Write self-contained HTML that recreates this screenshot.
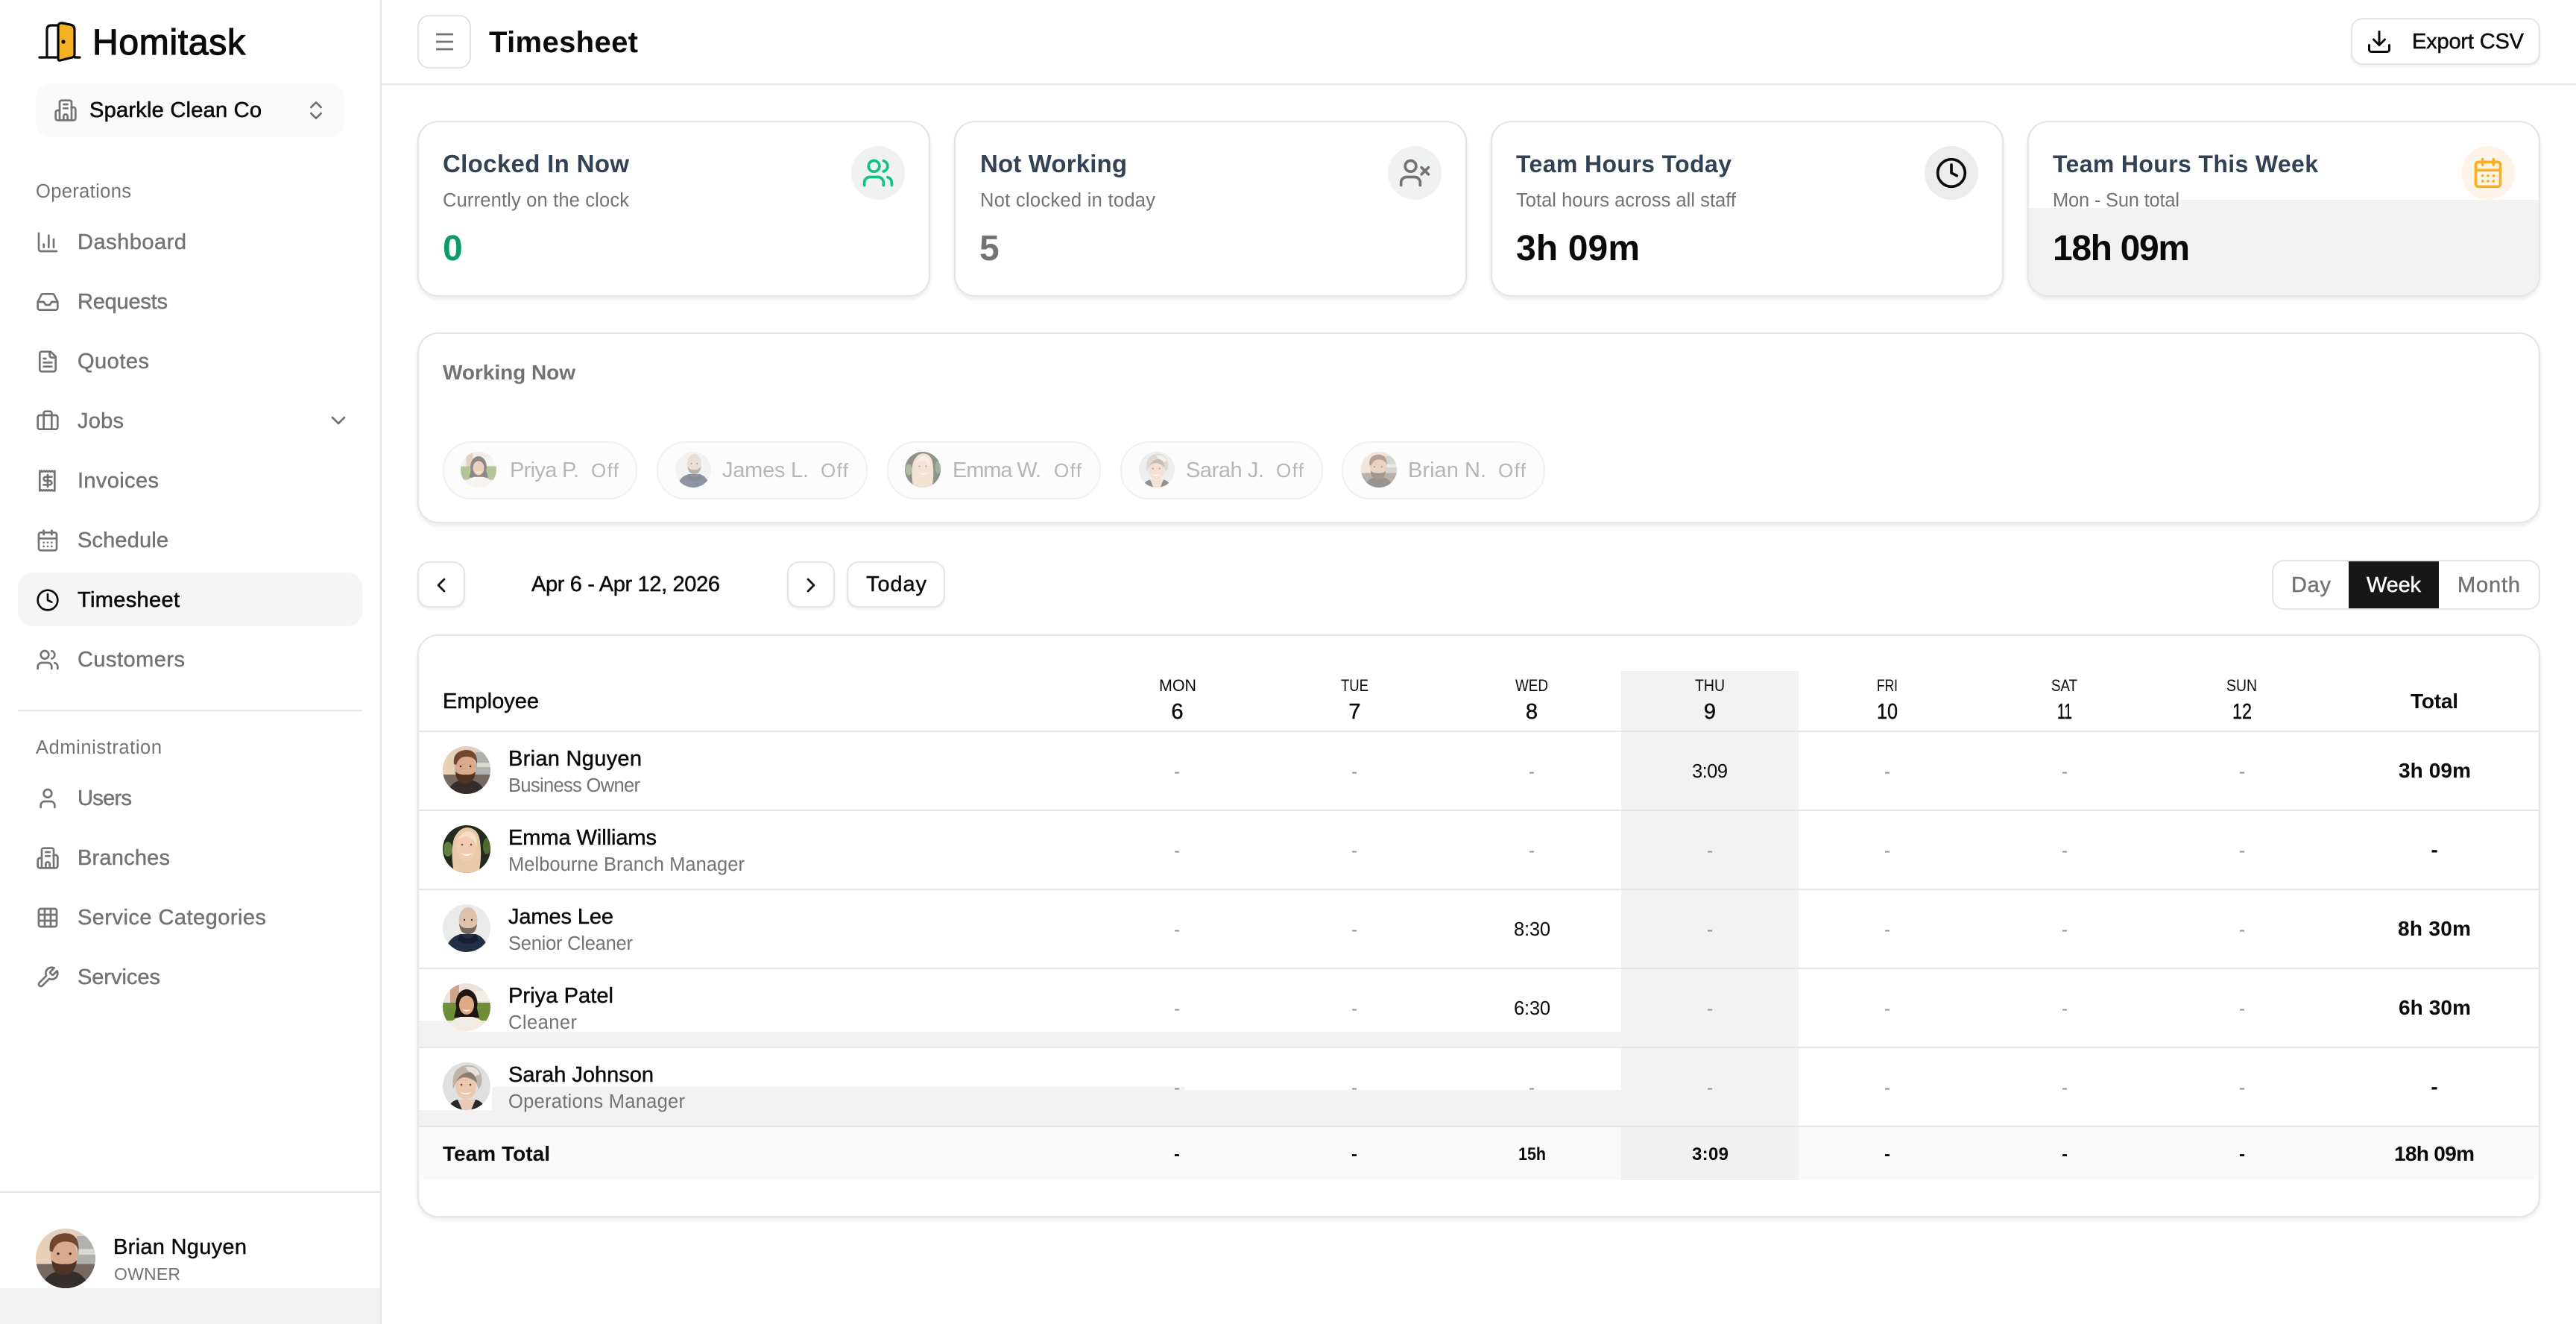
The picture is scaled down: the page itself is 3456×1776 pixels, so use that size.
<!DOCTYPE html>
<html lang="en">
<head>
<meta charset="utf-8">
<title>Timesheet - Homitask</title>
<style>
html,body{margin:0;padding:0;width:3456px;height:1776px;overflow:hidden;background:#fff;font-family:"Liberation Sans",sans-serif}
.b{position:absolute;box-sizing:border-box}
.card{background:#fff;border:2px solid #e5e5e5;border-radius:28px;box-shadow:0 3px 6px rgba(0,0,0,.09);overflow:hidden}
.btn{background:#fff;border:2px solid #e5e5e5;border-radius:16px;box-shadow:0 2px 3px rgba(0,0,0,.07)}
.chip{background:#fcfcfc;border:2px solid #f1f1f1;border-radius:38px;top:592px;height:78px}
.ln{left:562px;width:2844px;height:2px;background:#e5e5e5}
.gr{background:#f2f2f2}
svg.top{position:absolute;left:0;top:0}
text{font-family:"Liberation Sans",sans-serif;white-space:pre}
.s22{font-size:22px}.s24{font-size:25.5px}.s28{font-size:29px}.s32{font-size:32px}.s40{font-size:40px}.s48{font-size:48px}
.g{fill:#737373}.k{fill:#0a0a0a}.t{fill:#334155}
.m{stroke-width:.45px}
.g.m{stroke:#737373}.k.m{stroke:#0a0a0a}
.B{font-weight:700}
.B.s28{font-size:28px}.B.s24{font-size:24px}
.o{fill:#737373;font-size:29px}.o2{fill:#737373;font-size:26px}
.d{fill:#8c8c8c;font-size:24px;text-anchor:middle}
.db{fill:#0a0a0a;font-size:24px;font-weight:700;text-anchor:middle}
.c{text-anchor:middle}
.ic{fill:none;stroke:#737373;stroke-width:2;stroke-linecap:round;stroke-linejoin:round}
.ik{fill:none;stroke:#0a0a0a;stroke-width:2;stroke-linecap:round;stroke-linejoin:round}
.ig{fill:none;stroke:#14c088;stroke-width:2;stroke-linecap:round;stroke-linejoin:round}
.ia{fill:none;stroke:#f5b026;stroke-width:2;stroke-linecap:round;stroke-linejoin:round}
</style>
</head>
<body>
<svg width="0" height="0" style="position:absolute">
<defs>
<clipPath id="cc"><circle cx="32" cy="32" r="32"/></clipPath>
<symbol id="i-chart" viewBox="0 0 24 24"><path d="M3 3v16a2 2 0 0 0 2 2h16"/><path d="M18 17V9"/><path d="M13 17V5"/><path d="M8 17v-3"/></symbol>
<symbol id="i-inbox" viewBox="0 0 24 24"><polyline points="22 12 16 12 14 15 10 15 8 12 2 12"/><path d="M5.45 5.11 2 12v6a2 2 0 0 0 2 2h16a2 2 0 0 0 2-2v-6l-3.45-6.89A2 2 0 0 0 16.76 4H7.24a2 2 0 0 0-1.79 1.11z"/></symbol>
<symbol id="i-file" viewBox="0 0 24 24"><path d="M15 2H6a2 2 0 0 0-2 2v16a2 2 0 0 0 2 2h12a2 2 0 0 0 2-2V7Z"/><path d="M14 2v4a2 2 0 0 0 2 2h4"/><path d="M10 9H8"/><path d="M16 13H8"/><path d="M16 17H8"/></symbol>
<symbol id="i-case" viewBox="0 0 24 24"><path d="M16 20V4a2 2 0 0 0-2-2h-4a2 2 0 0 0-2 2v16"/><rect width="20" height="14" x="2" y="6" rx="2"/></symbol>
<symbol id="i-rcpt" viewBox="0 0 24 24"><path d="M4 2v20l1.3-.8 1.4.8 1.3-.8 1.4.8 1.3-.8 1.3.8 1.3-.8 1.4.8 1.3-.8 1.4.8 1.3-.8.3.8V2l-1.3.8-1.4-.8-1.3.8-1.4-.8-1.3.8-1.3-.8-1.3.8-1.4-.8-1.3.8-1.4-.8-.3.8Z"/><path d="M16 8h-6a2 2 0 1 0 0 4h4a2 2 0 1 1 0 4H8"/><path d="M12 18V6"/></symbol>
<symbol id="i-cal" viewBox="0 0 24 24"><path d="M8 2v4"/><path d="M16 2v4"/><rect width="18" height="18" x="3" y="4" rx="2"/><path d="M3 10h18"/><path d="M8 14h.01M12 14h.01M16 14h.01M8 18h.01M12 18h.01M16 18h.01"/></symbol>
<symbol id="i-clock" viewBox="0 0 24 24"><circle cx="12" cy="12" r="10"/><polyline points="12 6 12 12 16 14"/></symbol>
<symbol id="i-users" viewBox="0 0 24 24"><path d="M16 21v-2a4 4 0 0 0-4-4H6a4 4 0 0 0-4 4v2"/><circle cx="9" cy="7" r="4"/><path d="M22 21v-2a4 4 0 0 0-3-3.87"/><path d="M16 3.13a4 4 0 0 1 0 7.75"/></symbol>
<symbol id="i-userx" viewBox="0 0 24 24"><path d="M16 21v-2a4 4 0 0 0-4-4H6a4 4 0 0 0-4 4v2"/><circle cx="9" cy="7" r="4"/><line x1="17" x2="22" y1="8" y2="13"/><line x1="22" x2="17" y1="8" y2="13"/></symbol>
<symbol id="i-user" viewBox="0 0 24 24"><path d="M19 21v-2a4 4 0 0 0-4-4H9a4 4 0 0 0-4 4v2"/><circle cx="12" cy="7" r="4"/></symbol>
<symbol id="i-bld" viewBox="0 0 24 24"><path d="M6 22V4a2 2 0 0 1 2-2h8a2 2 0 0 1 2 2v18Z"/><path d="M6 12H4a2 2 0 0 0-2 2v6a2 2 0 0 0 2 2h2"/><path d="M18 9h2a2 2 0 0 1 2 2v9a2 2 0 0 1-2 2h-2"/><path d="M10 6h4"/><path d="M10 10h4"/><path d="M10 22v-4a2 2 0 0 1 4 0v4"/></symbol>
<symbol id="i-grid" viewBox="0 0 24 24"><rect width="18" height="18" x="3" y="3" rx="2"/><path d="M3 9h18"/><path d="M3 15h18"/><path d="M9 3v18"/><path d="M15 3v18"/></symbol>
<symbol id="i-wrench" viewBox="0 0 24 24"><path d="M14.7 6.3a1 1 0 0 0 0 1.4l1.6 1.6a1 1 0 0 0 1.4 0l3.77-3.77a6 6 0 0 1-7.94 7.94l-6.91 6.91a2.12 2.12 0 0 1-3-3l6.91-6.91a6 6 0 0 1 7.94-7.94l-3.76 3.76z"/></symbol>
<symbol id="i-updown" viewBox="0 0 24 24"><path d="m7 15 5 5 5-5"/><path d="m7 9 5-5 5 5"/></symbol>
<symbol id="i-down" viewBox="0 0 24 24"><path d="m6 9 6 6 6-6"/></symbol>
<symbol id="i-left" viewBox="0 0 24 24"><path d="m15 18-6-6 6-6"/></symbol>
<symbol id="i-right" viewBox="0 0 24 24"><path d="m9 18 6-6-6-6"/></symbol>
<symbol id="i-dl" viewBox="0 0 24 24"><path d="M21 15v4a2 2 0 0 1-2 2H5a2 2 0 0 1-2-2v-4"/><polyline points="7 10 12 15 17 10"/><line x1="12" x2="12" y1="15" y2="3"/></symbol>

<symbol id="av-b" viewBox="0 0 64 64"><g clip-path="url(#cc)">
<rect width="64" height="64" fill="#e2cfbd"/><rect x="0" y="0" width="14" height="42" fill="#e9d0b8"/><rect x="44" y="8" width="20" height="34" fill="#b0b0ae"/><rect x="46" y="22" width="18" height="6" fill="#dcd8d2"/><rect x="0" y="38" width="64" height="26" fill="#77695f"/>
<path d="M6 64Q10 48 24 46L40 46Q52 48 58 64Z" fill="#332e2c"/>
<ellipse cx="30" cy="28" rx="14" ry="19" fill="#d9aa8c"/>
<path d="M15 24Q13 7 30 5Q47 4 46 24Q43 14 33 14Q22 13 18 25Z" fill="#74462e"/>
<path d="M17 34Q18 50 30 50Q43 49 44 34Q40 39 31 38Q22 39 17 34Z" fill="#4f3426"/>
<circle cx="24" cy="27" r="1.3" fill="#3a2a22"/><circle cx="37" cy="27" r="1.3" fill="#3a2a22"/>
</g></symbol>
<symbol id="av-e" viewBox="0 0 64 64"><g clip-path="url(#cc)">
<rect width="64" height="64" fill="#242a1c"/><ellipse cx="7" cy="32" rx="6" ry="10" fill="#5f8040"/><ellipse cx="59" cy="28" rx="5" ry="11" fill="#4c6a32"/>
<path d="M15 64Q10 36 15 18Q22 3 33 3Q48 4 50 22Q53 44 48 64Z" fill="#eac9a8"/>
<ellipse cx="32" cy="30" rx="13" ry="18" fill="#f3ccb0"/>
<path d="M19 22Q24 8 36 8Q46 11 46 28Q41 17 31 15Q23 16 19 22Z" fill="#f4e0c8"/>
<path d="M24 37Q32 45 40 37Q32 41 24 37Z" fill="#fff"/>
<circle cx="26" cy="26" r="1.3" fill="#55585a"/><circle cx="38" cy="26" r="1.3" fill="#55585a"/>
</g></symbol>
<symbol id="av-j" viewBox="0 0 64 64"><g clip-path="url(#cc)">
<rect width="64" height="64" fill="#e9eaea"/>
<path d="M3 64Q7 44 24 40L44 40Q58 44 62 64Z" fill="#232f47"/>
<ellipse cx="34" cy="21" rx="12.5" ry="17" fill="#dcc2ad"/>
<path d="M22 26Q23 40 34 40Q45 40 46 26Q42 33 34 32Q26 33 22 26Z" fill="#77695e"/>
<path d="M24 40Q34 52 44 40L48 48Q34 58 20 48Z" fill="#161f30"/>
<circle cx="29" cy="21" r="1.2" fill="#3a2f2a"/><circle cx="39" cy="21" r="1.2" fill="#3a2f2a"/>
</g></symbol>
<symbol id="av-p" viewBox="0 0 64 64"><g clip-path="url(#cc)">
<rect width="64" height="64" fill="#ece2da"/><rect x="10" y="2" width="12" height="24" fill="#cfa58a"/><rect x="44" y="10" width="20" height="14" fill="#f2efe9"/><rect x="0" y="26" width="64" height="24" fill="#6f8e38"/>
<ellipse cx="32" cy="27" rx="14.5" ry="19" fill="#1d1613"/>
<path d="M19 30L15 46H49L45 30Z" fill="#1d1613"/>
<ellipse cx="32" cy="29" rx="10" ry="13" fill="#dcaa86"/>
<path d="M23 22Q32 11 41 22Q42 14 32 12Q22 14 23 22Z" fill="#1d1613"/>
<path d="M26 35Q32 40 38 35Q32 37 26 35Z" fill="#fff"/>
<path d="M4 64Q10 48 24 45L40 45Q56 48 60 64Z" fill="#f2ece7"/>
</g></symbol>
<symbol id="av-s" viewBox="0 0 64 64"><g clip-path="url(#cc)">
<rect width="64" height="64" fill="#dfe1e0"/>
<path d="M18 50L46 50 50 64 12 64Z" fill="#ecc9b2"/><path d="M6 64Q10 52 20 50L26 64ZM58 64Q54 52 44 50L38 64Z" fill="#26282c"/>
<path d="M14 36Q10 8 30 4Q48 2 52 18Q54 30 48 36Q42 18 30 16Q20 20 14 36Z" fill="#bdb5a9"/>
<path d="M30 6Q46 4 50 16L40 20Z" fill="#e7e3da"/>
<ellipse cx="31" cy="32" rx="14" ry="18" fill="#ecc8af"/>
<path d="M17 28Q22 14 36 13Q45 16 46 28Q38 20 28 20Q20 22 17 28Z" fill="#8b7f72"/>
<path d="M23 40Q31 46 39 40Q31 43 23 40Z" fill="#fff"/>
<circle cx="25" cy="30" r="1.3" fill="#4a3e38"/><circle cx="37" cy="30" r="1.3" fill="#4a3e38"/>
</g></symbol>
</defs>
</svg>

<!-- sidebar boxes -->
<div class="b" style="left:510px;top:0;width:2px;height:1776px;background:#e5e5e5"></div>
<div class="b" style="left:48px;top:112px;width:414px;height:72px;background:#fafafa;border-radius:20px"></div>
<div class="b" style="left:24px;top:768px;width:462px;height:72px;background:#f5f5f5;border-radius:20px"></div>
<div class="b" style="left:24px;top:952px;width:462px;height:2px;background:#e5e5e5"></div>
<div class="b" style="left:0;top:1598px;width:510px;height:2px;background:#e5e5e5"></div>
<div class="b gr" style="left:0;top:1728px;width:510px;height:48px"></div>

<!-- header boxes -->
<div class="b" style="left:512px;top:112px;width:2944px;height:2px;background:#e5e5e5"></div>
<div class="b" style="left:560px;top:20px;width:72px;height:72px;border:2px solid #e5e5e5;border-radius:16px;background:#fff"></div>
<div class="b btn" style="left:3154px;top:24px;width:254px;height:63px"></div>

<!-- stat cards -->
<div class="b card" style="left:560px;top:162px;width:688px;height:236px"></div>
<div class="b card" style="left:1280px;top:162px;width:688px;height:236px"></div>
<div class="b card" style="left:2000px;top:162px;width:688px;height:236px"></div>
<div class="b card" style="left:2720px;top:162px;width:688px;height:236px">
  <div class="b gr" style="left:0;top:115px;width:202px;height:120px"></div>
  <div class="b gr" style="left:202px;top:104px;width:486px;height:130px"></div>
</div>
<div class="b" style="left:1142px;top:196px;width:72px;height:72px;border-radius:50%;background:#f0f2f1"></div>
<div class="b" style="left:1862px;top:196px;width:72px;height:72px;border-radius:50%;background:#f0f2f1"></div>
<div class="b" style="left:2582px;top:196px;width:72px;height:72px;border-radius:50%;background:#ececec"></div>
<div class="b" style="left:3302px;top:196px;width:72px;height:72px;border-radius:50%;background:#fdf3e6"></div>

<!-- working now -->
<div class="b card" style="left:560px;top:446px;width:2848px;height:256px"></div>
<div class="b chip" style="left:594px;width:261px"></div>
<div class="b chip" style="left:881px;width:283px"></div>
<div class="b chip" style="left:1190px;width:287px"></div>
<div class="b chip" style="left:1503px;width:272px"></div>
<div class="b chip" style="left:1800px;width:273px"></div>

<!-- date nav -->
<div class="b btn" style="left:560px;top:753px;width:64px;height:62px"></div>
<div class="b btn" style="left:1056px;top:753px;width:64px;height:62px"></div>
<div class="b btn" style="left:1136px;top:753px;width:132px;height:62px"></div>
<div class="b" style="left:3048px;top:751px;width:360px;height:67px;border:2px solid #e5e5e5;border-radius:16px;background:#fff"></div>
<div class="b" style="left:3151px;top:753px;width:121px;height:63px;background:#171717"></div>

<!-- table -->
<div class="b card" style="left:560px;top:851px;width:2848px;height:782px"></div>
<div class="b gr" style="left:2175px;top:900px;width:238px;height:610px"></div>
<div class="b gr" style="left:562px;top:1369px;width:64px;height:35px"></div>
<div class="b gr" style="left:562px;top:1384px;width:1613px;height:20px"></div>
<div class="b gr" style="left:562px;top:1489px;width:98px;height:21px"></div>
<div class="b gr" style="left:660px;top:1458px;width:930px;height:52px"></div>
<div class="b gr" style="left:1590px;top:1462px;width:585px;height:48px"></div>
<div class="b" style="left:562px;top:1512px;width:2844px;height:71px;background:#fafafa"></div>
<div class="b" style="left:2175px;top:1512px;width:238px;height:71px;background:#f0f1f0"></div>
<div class="b ln" style="top:980px"></div>
<div class="b ln" style="top:1086px"></div>
<div class="b ln" style="top:1192px"></div>
<div class="b ln" style="top:1298px"></div>
<div class="b ln" style="top:1404px"></div>
<div class="b ln" style="top:1510px"></div>

<svg class="top" width="3456" height="1776" viewBox="0 0 3456 1776" xmlns="http://www.w3.org/2000/svg">
<!-- logo -->
<path d="M63 77V40Q63 34 69 34H78" fill="none" stroke="#0a0a0a" stroke-width="3.2"/>
<path d="M53 77H78M100 77H107" fill="none" stroke="#0a0a0a" stroke-width="3.2" stroke-linecap="round"/>
<path d="M78 36Q78 30 84 31L94 33Q100 34 100 40V73Q100 76 97 77L81 81Q78 82 78 78Z" fill="#f4b223" stroke="#0a0a0a" stroke-width="3.2" stroke-linejoin="round"/>
<circle cx="85" cy="56" r="2.6" fill="#0a0a0a"/>
<text x="124" y="73" class="s48 k m" style="stroke-width:1.2px" textLength="205" lengthAdjust="spacing">Homitask</text>

<!-- switcher -->
<use href="#i-bld" x="72" y="132" width="32" height="32" class="ic"/>
<text x="120" y="157" class="s28 k m" style="stroke-width:.6px" textLength="231" lengthAdjust="spacing">Sparkle Clean Co</text>
<use href="#i-updown" x="408" y="132" width="32" height="32" class="ic"/>

<!-- nav -->
<text x="48" y="265" class="s24 g" textLength="128" lengthAdjust="spacing">Operations</text>
<use href="#i-chart" x="48" y="309" width="32" height="32" class="ic"/>
<text x="104" y="334" class="s28 g m" textLength="146" lengthAdjust="spacing">Dashboard</text>
<use href="#i-inbox" x="48" y="389" width="32" height="32" class="ic"/>
<text x="104" y="414" class="s28 g m" textLength="121" lengthAdjust="spacing">Requests</text>
<use href="#i-file" x="48" y="469" width="32" height="32" class="ic"/>
<text x="104" y="494" class="s28 g m" textLength="96" lengthAdjust="spacing">Quotes</text>
<use href="#i-case" x="48" y="549" width="32" height="32" class="ic"/>
<text x="104" y="574" class="s28 g m" textLength="62" lengthAdjust="spacing">Jobs</text>
<use href="#i-down" x="438" y="548" width="32" height="32" class="ic"/>
<use href="#i-rcpt" x="48" y="629" width="32" height="32" class="ic"/>
<text x="104" y="654" class="s28 g m" textLength="109" lengthAdjust="spacing">Invoices</text>
<use href="#i-cal" x="48" y="709" width="32" height="32" class="ic"/>
<text x="104" y="734" class="s28 g m" textLength="122" lengthAdjust="spacing">Schedule</text>
<use href="#i-clock" x="48" y="789" width="32" height="32" class="ik"/>
<text x="104" y="814" class="s28 k m" style="stroke-width:.6px" textLength="137" lengthAdjust="spacing">Timesheet</text>
<use href="#i-users" x="48" y="869" width="32" height="32" class="ic"/>
<text x="104" y="894" class="s28 g m" textLength="144" lengthAdjust="spacing">Customers</text>

<text x="48" y="1011" class="s24 g" textLength="169" lengthAdjust="spacing">Administration</text>
<use href="#i-user" x="48" y="1055" width="32" height="32" class="ic"/>
<text x="104" y="1080" class="s28 g m" textLength="73" lengthAdjust="spacing">Users</text>
<use href="#i-bld" x="48" y="1135" width="32" height="32" class="ic"/>
<text x="104" y="1160" class="s28 g m" textLength="124" lengthAdjust="spacing">Branches</text>
<use href="#i-grid" x="48" y="1215" width="32" height="32" class="ic"/>
<text x="104" y="1240" class="s28 g m" textLength="253" lengthAdjust="spacing">Service Categories</text>
<use href="#i-wrench" x="48" y="1295" width="32" height="32" class="ic"/>
<text x="104" y="1320" class="s28 g m" textLength="111" lengthAdjust="spacing">Services</text>

<!-- footer user -->
<use href="#av-b" x="48" y="1648" width="80" height="80"/>
<text x="152" y="1682" class="s28 k m" textLength="179" lengthAdjust="spacing">Brian Nguyen</text>
<text x="153" y="1717" class="g" style="font-size:23px" textLength="89" lengthAdjust="spacing">OWNER</text>

<!-- header -->
<path d="M585 46H608M585 56H608M585 66H608" fill="none" stroke="#737373" stroke-width="2.7"/>
<text x="656" y="70" class="s40 k B" textLength="200" lengthAdjust="spacing">Timesheet</text>
<use href="#i-dl" x="3174" y="38" width="36" height="36" class="ik"/>
<text x="3236" y="65" class="s28 k m" textLength="150" lengthAdjust="spacing">Export CSV</text>

<!-- stat card text -->
<text x="594" y="231" class="t B" style="font-size:33px" textLength="250" lengthAdjust="spacing">Clocked In Now</text>
<text x="594" y="277" class="s24 g" textLength="250" lengthAdjust="spacing">Currently on the clock</text>
<text x="594" y="349" class="s48 B" fill="#0b9a6b">0</text>
<use href="#i-users" x="1156" y="210" width="44" height="44" class="ig"/>

<text x="1315" y="231" class="t B" style="font-size:33px" textLength="197" lengthAdjust="spacing">Not Working</text>
<text x="1315" y="277" class="s24 g" textLength="235" lengthAdjust="spacing">Not clocked in today</text>
<text x="1314" y="349" class="s48 B g">5</text>
<use href="#i-userx" x="1876" y="210" width="44" height="44" class="ic"/>

<text x="2034" y="231" class="s32 t B" textLength="289" lengthAdjust="spacing">Team Hours Today</text>
<text x="2034" y="277" class="s24 g" textLength="295" lengthAdjust="spacing">Total hours across all staff</text>
<text x="2034" y="349" class="s48 k B" textLength="166" lengthAdjust="spacing">3h 09m</text>
<use href="#i-clock" x="2596" y="210" width="44" height="44" class="ik"/>

<text x="2754" y="231" class="s32 t B" textLength="356" lengthAdjust="spacing">Team Hours This Week</text>
<text x="2754" y="277" class="s24 g" textLength="170" lengthAdjust="spacing">Mon - Sun total</text>
<text x="2754" y="349" class="s48 k B" textLength="184" lengthAdjust="spacing">18h 09m</text>
<use href="#i-cal" x="3316" y="210" width="44" height="44" class="ia"/>

<!-- working now -->
<text x="594" y="509" class="s28 g B" textLength="178" lengthAdjust="spacing">Working Now</text>
<g opacity=".5">
<use href="#av-p" x="618" y="606" width="48" height="48"/>
<text x="684" y="640" class="o" textLength="93" lengthAdjust="spacing">Priya P.</text>
<text x="793" y="640" class="o2" textLength="37" lengthAdjust="spacing">Off</text>
<use href="#av-j" x="906" y="606" width="48" height="48"/>
<text x="969" y="640" class="o" textLength="116" lengthAdjust="spacing">James L.</text>
<text x="1101" y="640" class="o2" textLength="37" lengthAdjust="spacing">Off</text>
<use href="#av-e" x="1214" y="606" width="48" height="48"/>
<text x="1278" y="640" class="o" textLength="119" lengthAdjust="spacing">Emma W.</text>
<text x="1414" y="640" class="o2" textLength="37" lengthAdjust="spacing">Off</text>
<use href="#av-s" x="1528" y="606" width="48" height="48"/>
<text x="1591" y="640" class="o" textLength="105" lengthAdjust="spacing">Sarah J.</text>
<text x="1712" y="640" class="o2" textLength="37" lengthAdjust="spacing">Off</text>
<use href="#av-b" x="1826" y="606" width="48" height="48"/>
<text x="1889" y="640" class="o" textLength="105" lengthAdjust="spacing">Brian N.</text>
<text x="2010" y="640" class="o2" textLength="37" lengthAdjust="spacing">Off</text>
</g>

<!-- date nav -->
<use href="#i-left" x="576" y="769" width="32" height="32" class="ik"/>
<text x="713" y="793" class="s28 k m" textLength="253" lengthAdjust="spacing">Apr 6 - Apr 12, 2026</text>
<use href="#i-right" x="1072" y="769" width="32" height="32" class="ik"/>
<text x="1162" y="793" class="s28 k m" textLength="81" lengthAdjust="spacing">Today</text>
<text x="3074" y="794" class="s28 g m" textLength="53" lengthAdjust="spacing">Day</text>
<text x="3175" y="794" class="s28 m" fill="#fff" stroke="#fff" textLength="73" lengthAdjust="spacing">Week</text>
<text x="3297" y="794" class="s28 g m" textLength="84" lengthAdjust="spacing">Month</text>

<!-- table head -->
<text x="594" y="950" class="s28 k m" textLength="129" lengthAdjust="spacing">Employee</text>
<text x="1555" y="927" class="s22 k" textLength="50" lengthAdjust="spacingAndGlyphs">MON</text>
<text x="1799" y="927" class="s22 k" textLength="37" lengthAdjust="spacingAndGlyphs">TUE</text>
<text x="2033" y="927" class="s22 k" textLength="44" lengthAdjust="spacingAndGlyphs">WED</text>
<text x="2274" y="927" class="s22 k" textLength="40" lengthAdjust="spacingAndGlyphs">THU</text>
<text x="2518" y="927" class="s22 k" textLength="28" lengthAdjust="spacingAndGlyphs">FRI</text>
<text x="2752" y="927" class="s22 k" textLength="35" lengthAdjust="spacingAndGlyphs">SAT</text>
<text x="2987" y="927" class="s22 k" textLength="41" lengthAdjust="spacingAndGlyphs">SUN</text>
<text x="1579.5" y="964" class="s28 k m c">6</text>
<text x="1817.5" y="964" class="s28 k m c">7</text>
<text x="2055" y="964" class="s28 k m c">8</text>
<text x="2294" y="964" class="s28 k m c">9</text>
<text x="2518" y="964" class="s28 k m" textLength="28" lengthAdjust="spacingAndGlyphs">10</text>
<text x="2760" y="964" class="s28 k m" textLength="20" lengthAdjust="spacingAndGlyphs">11</text>
<text x="2995" y="964" class="s28 k m" textLength="26" lengthAdjust="spacingAndGlyphs">12</text>
<text x="3234" y="950" class="s28 k B" textLength="64" lengthAdjust="spacing">Total</text>

<!-- rows -->
<use href="#av-b" x="594" y="1001" width="64" height="64"/>
<text x="682" y="1027" class="s28 k m" textLength="179" lengthAdjust="spacing">Brian Nguyen</text>
<text x="682" y="1062" class="s24 g" textLength="177" lengthAdjust="spacing">Business Owner</text>
<use href="#av-e" x="594" y="1107" width="64" height="64"/>
<text x="682" y="1133" class="s28 k m" textLength="199" lengthAdjust="spacing">Emma Williams</text>
<text x="682" y="1168" class="s24 g" textLength="317" lengthAdjust="spacing">Melbourne Branch Manager</text>
<use href="#av-j" x="594" y="1213" width="64" height="64"/>
<text x="682" y="1239" class="s28 k m" textLength="141" lengthAdjust="spacing">James Lee</text>
<text x="682" y="1274" class="s24 g" textLength="167" lengthAdjust="spacing">Senior Cleaner</text>
<use href="#av-p" x="594" y="1319" width="64" height="64"/>
<text x="682" y="1345" class="s28 k m" textLength="141" lengthAdjust="spacing">Priya Patel</text>
<text x="682" y="1380" class="s24 g" textLength="92" lengthAdjust="spacing">Cleaner</text>
<use href="#av-s" x="594" y="1425" width="64" height="64"/>
<text x="682" y="1451" class="s28 k m" textLength="195" lengthAdjust="spacing">Sarah Johnson</text>
<text x="682" y="1486" class="s24 g" textLength="237" lengthAdjust="spacing">Operations Manager</text>

<text class="d" y="1043"><tspan x="1579">-</tspan><tspan x="1817">-</tspan><tspan x="2055">-</tspan><tspan x="2532">-</tspan><tspan x="2770">-</tspan><tspan x="3008">-</tspan></text>
<text x="2270" y="1043" class="s24 k" textLength="48" lengthAdjust="spacing">3:09</text>
<text x="3218" y="1043" class="s28 k B" textLength="97" lengthAdjust="spacing">3h 09m</text>

<text class="d" y="1149"><tspan x="1579">-</tspan><tspan x="1817">-</tspan><tspan x="2055">-</tspan><tspan x="2294">-</tspan><tspan x="2532">-</tspan><tspan x="2770">-</tspan><tspan x="3008">-</tspan></text>
<text x="3266" y="1149" class="s28 k B c">-</text>

<text class="d" y="1255"><tspan x="1579">-</tspan><tspan x="1817">-</tspan><tspan x="2294">-</tspan><tspan x="2532">-</tspan><tspan x="2770">-</tspan><tspan x="3008">-</tspan></text>
<text x="2031" y="1255" class="s24 k" textLength="49" lengthAdjust="spacing">8:30</text>
<text x="3217" y="1255" class="s28 k B" textLength="98" lengthAdjust="spacing">8h 30m</text>

<text class="d" y="1361"><tspan x="1579">-</tspan><tspan x="1817">-</tspan><tspan x="2294">-</tspan><tspan x="2532">-</tspan><tspan x="2770">-</tspan><tspan x="3008">-</tspan></text>
<text x="2031" y="1361" class="s24 k" textLength="49" lengthAdjust="spacing">6:30</text>
<text x="3218" y="1361" class="s28 k B" textLength="97" lengthAdjust="spacing">6h 30m</text>

<text class="d" y="1467"><tspan x="1579">-</tspan><tspan x="1817">-</tspan><tspan x="2055">-</tspan><tspan x="2294">-</tspan><tspan x="2532">-</tspan><tspan x="2770">-</tspan><tspan x="3008">-</tspan></text>
<text x="3266" y="1467" class="s28 k B c">-</text>

<!-- team total -->
<text x="594" y="1557" class="s28 k B" textLength="144" lengthAdjust="spacing">Team Total</text>
<text class="db" y="1556"><tspan x="1579">-</tspan><tspan x="1817">-</tspan><tspan x="2532">-</tspan><tspan x="2770">-</tspan><tspan x="3008">-</tspan></text>
<text x="2037" y="1556" class="s24 k B" textLength="37" lengthAdjust="spacingAndGlyphs">15h</text>
<text x="2270" y="1556" class="s24 k B" textLength="49" lengthAdjust="spacing">3:09</text>
<text x="3212" y="1557" class="s28 k B" textLength="108" lengthAdjust="spacing">18h 09m</text>
</svg>
</body>
</html>
